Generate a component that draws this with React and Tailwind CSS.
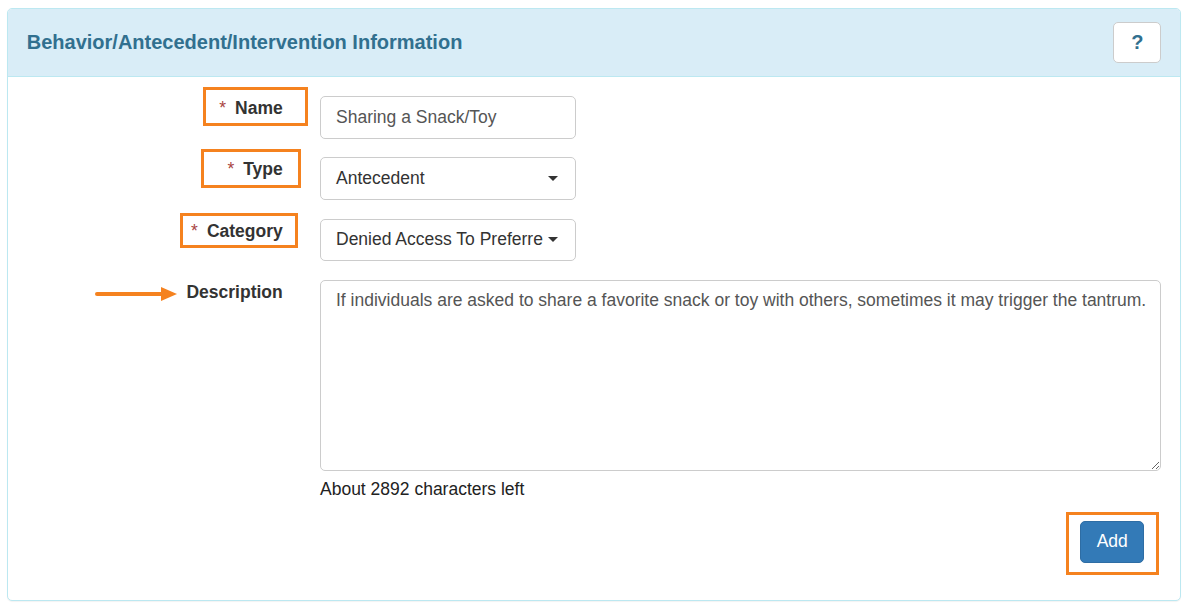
import { useState } from "react";

const font = { fontFamily: '"Liberation Sans", Arial, sans-serif' };

function Caret() {
  return (
    <svg width="10" height="5" viewBox="0 0 10 5" className="shrink-0">
      <path d="M0 0 L10 0 L5 5 Z" fill="#333" />
    </svg>
  );
}

function Annotation({ className }) {
  return (
    <div
      className={`absolute border-[3.5px] border-[#f5821f] pointer-events-none ${className}`}
    />
  );
}

function Arrow() {
  return (
    <svg
      width="84"
      height="16"
      viewBox="0 0 84 16"
      className="absolute left-[68px] top-[6px] pointer-events-none"
    >
      <line x1="2" y1="8" x2="68" y2="8" stroke="#f5821f" strokeWidth="4" strokeLinecap="round" />
      <path d="M66 1 L82 8 L66 15 Z" fill="#f5821f" />
    </svg>
  );
}

function Label({ required, children, annotation }) {
  return (
    <div className="relative w-[256px] shrink-0 text-right text-[17.5px] leading-[25px] font-bold text-[#333]">
      {annotation}
      {required && <span className="text-[#a94442] font-normal mr-[9px]">*</span>}
      {children}
    </div>
  );
}

function FakeSelect({ value }) {
  return (
    <button
      type="button"
      className="flex items-center w-[256px] h-[42.5px] border border-[#ccc] rounded-[5px] bg-white pl-[15px] pr-[17px] text-[17.5px] text-[#333] text-left"
    >
      <span className="flex-1 whitespace-nowrap">{value}</span>
      <span className="ml-[3px]">
        <Caret />
      </span>
    </button>
  );
}

export default function App() {
  const [name, setName] = useState("Sharing a Snack/Toy");
  const [desc, setDesc] = useState(
    "If individuals are asked to share a favorite snack or toy with others, sometimes it may trigger the tantrum."
  );

  return (
    <div className="bg-white min-h-[606px] px-[7px] pt-[8px]" style={font}>
      <div className="border border-[#bce8f1] rounded-[5px] bg-white shadow-[0_1px_1px_rgba(0,0,0,0.05)]">
        <div className="flex items-center justify-between bg-[#d9edf7] border-b border-[#bce8f1] rounded-t-[4px] px-[18.75px] py-[12.5px]">
          <h3 className="text-[20px] font-bold text-[#31708f]">
            Behavior/Antecedent/Intervention Information
          </h3>
          <button
            type="button"
            className="w-[48px] h-[41.5px] bg-white border border-[#ccc] rounded-[5px] text-[20px] font-bold text-[#31708f]"
          >
            ?
          </button>
        </div>

        <div className="px-[18.75px] pt-[19.5px] pb-[18.75px] text-[17.5px] leading-[25px] text-[#333]">
          <div className="flex gap-[37.25px] mb-[18.75px]">
            <Label required annotation={<Annotation className="left-[176px] top-[-9px] w-[105px] h-[39px]" />}>
              Name
            </Label>
            <input
              value={name}
              onChange={(e) => setName(e.target.value)}
              className="w-[256px] h-[42.5px] border border-[#ccc] rounded-[5px] px-[15px] text-[#555] outline-none"
            />
          </div>

          <div className="flex gap-[37.25px] mb-[18.75px]">
            <Label required annotation={<Annotation className="left-[174px] top-[-8px] w-[100px] h-[39px]" />}>
              Type
            </Label>
            <FakeSelect value="Antecedent" />
          </div>

          <div className="flex gap-[37.25px] mb-[18.75px]">
            <Label required annotation={<Annotation className="left-[153px] top-[-5.5px] w-[118px] h-[35px]" />}>
              Category
            </Label>
            <FakeSelect value="Denied Access To Preferre" />
          </div>

          <div className="flex gap-[37.25px] mb-[18.75px]">
            <Label annotation={<Arrow />}>Description</Label>
            <div className="flex-1">
              <textarea
                value={desc}
                onChange={(e) => setDesc(e.target.value)}
                className="block w-full h-[191px] border border-[#ccc] rounded-[5px] pl-[15px] pr-[8px] py-[7.5px] text-[#555] outline-none"
              />
              <p className="mt-[6.25px] text-[#222]">
                About {3000 - desc.length} characters left
              </p>
            </div>
          </div>

          <div className="flex justify-end pr-[17px] mb-[18.75px]">
            <div className="relative">
              <Annotation className="left-[-14px] top-[-9px] w-[93px] h-[63px]" />
              <button
                type="button"
                className="w-[64px] h-[42px] bg-[#337ab7] border border-[#2e6da4] rounded-[5px] text-white text-[17.5px]"
              >
                Add
              </button>
            </div>
          </div>
        </div>
      </div>
    </div>
  );
}
